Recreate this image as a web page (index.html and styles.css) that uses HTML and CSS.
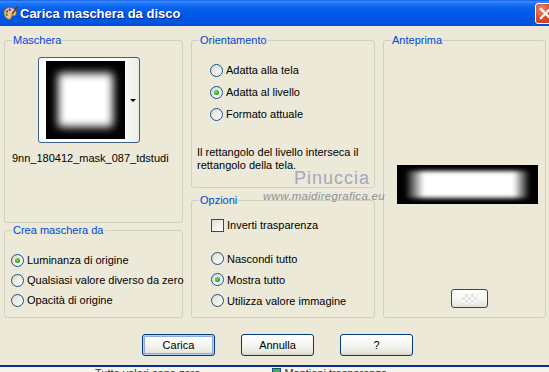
FILE: index.html
```html
<!DOCTYPE html>
<html lang="it">
<head>
<meta charset="utf-8">
<title>Carica maschera da disco</title>
<link rel="stylesheet" href="styles.css">
</head>
<body>
<div class="window">
  <div class="titlebar">
    <svg class="app-icon" width="15" height="15" viewBox="0 0 15 15">
      <path d="M7 1.5C3.5 1.5 1 3.8 1 7c0 3.2 2.6 6.3 5.6 6.3 1.4 0 1.6-1 1.1-1.9-.5-.9.1-1.6 1-1.6h1.6c1.8 0 3-1 3-2.9C13.3 3.8 10.6 1.5 7 1.5z" fill="#E9C79A" stroke="#8A5A2A" stroke-width=".8"/>
      <circle cx="4" cy="5.5" r="1.2" fill="#E02020"/>
      <circle cx="6.8" cy="3.8" r="1.2" fill="#2050E0"/>
      <circle cx="3.8" cy="8.8" r="1.2" fill="#20A020"/>
      <path d="M13.8 1.2 8.2 9.6" stroke="#6A3A10" stroke-width="1.6" stroke-linecap="round"/>
      <path d="M8.6 8.8 7.3 11" stroke="#F0B040" stroke-width="2" stroke-linecap="round"/>
    </svg>
    <span class="title">Carica maschera da disco</span>
    <span class="close">
      <svg width="21" height="21" viewBox="0 0 21 21"><path d="M6 6l9 9M15 6l-9 9" stroke="#fff" stroke-width="2.2" stroke-linecap="square"/></svg>
    </span>
  </div>

  <div class="client">
    <div class="columns">
      <div class="col">
        <fieldset class="group g-mask">
          <legend>Maschera</legend>
          <div class="thumb-btn">
            <div class="mask-img"><div class="mask-glow"></div></div>
            <span class="dd-arrow"></span>
          </div>
          <div class="filename">9nn_180412_mask_087_tdstudi</div>
        </fieldset>
        <fieldset class="group g-source">
          <legend>Crea maschera da</legend>
          <div class="opts opts-source">
            <div class="opt"><span class="radio on"></span><span>Luminanza di origine</span></div>
            <div class="opt"><span class="radio"></span><span>Qualsiasi valore diverso da zero</span></div>
            <div class="opt"><span class="radio"></span><span>Opacità di origine</span></div>
          </div>
        </fieldset>
      </div>

      <div class="col">
        <fieldset class="group g-orient">
          <legend>Orientamento</legend>
          <div class="opts opts-orient">
            <div class="opt"><span class="radio"></span><span>Adatta alla tela</span></div>
            <div class="opt"><span class="radio on"></span><span>Adatta al livello</span></div>
            <div class="opt"><span class="radio"></span><span>Formato attuale</span></div>
          </div>
          <p class="desc">Il rettangolo del livello interseca il<br>rettangolo della tela.</p>
        </fieldset>
        <fieldset class="group g-options">
          <legend>Opzioni</legend>
          <div class="opt opt-check"><span class="checkbox"></span><span>Inverti trasparenza</span></div>
          <div class="opts opts-options">
            <div class="opt"><span class="radio"></span><span>Nascondi tutto</span></div>
            <div class="opt"><span class="radio on"></span><span>Mostra tutto</span></div>
            <div class="opt"><span class="radio"></span><span>Utilizza valore immagine</span></div>
          </div>
        </fieldset>
      </div>

      <div class="col">
        <fieldset class="group g-preview">
          <legend>Anteprima</legend>
          <div class="preview"><div class="preview-glow"></div></div>
          <div class="mini-btn"><span class="checker"></span></div>
        </fieldset>
      </div>
    </div>

    <div class="buttons">
      <button class="btn default">Carica</button>
      <button class="btn">Annulla</button>
      <button class="btn">?</button>
    </div>

    <div class="watermark">
      <span class="wm-name">Pinuccia</span>
      <span class="wm-url">www.maidiregrafica.eu</span>
    </div>
  </div>
</div>
<div class="under">
  <span class="u1">Tutto valori sono zero</span>
  <span class="u2"><span class="ucheck"></span>Mantieni trasparenza</span>
</div>
</body>
</html>
```

FILE: styles.css
```css
* { box-sizing: border-box; }
html, body { margin: 0; padding: 0; }
body {
  width: 549px;
  height: 372px;
  overflow: hidden;
  background: #ECE9D8;
  font-family: "Liberation Sans", Arial, sans-serif;
  font-size: 11px;
  color: #000;
}
.window {
  height: 367px;
  display: flex;
  flex-direction: column;
}
.titlebar {
  height: 26px;
  flex: none;
  display: flex;
  align-items: center;
  overflow: hidden;
  background: linear-gradient(#0A5AE8 0%, #3D8BFA 6%, #1E74F6 14%, #0863EE 30%, #0058E6 55%, #0055E2 80%, #0050D8 100%);
  padding-left: 3px;
}
.app-icon { flex: none; margin-top: 1px; }
.title {
  margin-left: 2px;
  color: #fff;
  font-weight: bold;
  font-size: 13px;
  text-shadow: 1px 1px 0 #0A2A8A;
  margin-top: 1px;
}
.close {
  margin-left: auto;
  margin-right: -7px;
  width: 21px;
  height: 21px;
  flex: none;
  border: 1px solid #fff;
  border-radius: 3px;
  background: radial-gradient(circle at 30% 30%, #E98C6E 0%, #D8512E 45%, #C03A18 100%);
  display: flex;
  align-items: center;
  justify-content: center;
  margin-top: 1px;
}
.close svg { display: block; margin: -1px; }

.client {
  flex: 1;
  position: relative;
  padding: 8px 3px 0 4px;
  border-bottom: 2px solid #0A2C9E;
}
.columns {
  display: grid;
  grid-template-columns: 179px 184px 163px;
  column-gap: 8px;
}
.col { display: flex; flex-direction: column; }

.group {
  margin: 0;
  padding: 0;
  min-width: 0;
  border: 1px solid #D0D0BF;
  border-radius: 3px;
}
.group legend {
  color: #0046D5;
  font-size: 11px;
  line-height: 13px;
  padding: 0 1px;
  margin-left: 7px;
}
.g-mask { height: 189px; }
.g-source { height: 94px; margin-top: 1px; }
.g-orient { height: 154px; }
.g-options { height: 124px; margin-top: 6px; }
.g-preview { height: 284px; }

.thumb-btn {
  margin: 10px 0 0 33px;
  width: 102px;
  height: 86px;
  border: 1px solid #3C5F88;
  border-radius: 3px;
  background: linear-gradient(to right, #fff 0%, #fff 80%, #EDEDE8 100%);
  padding: 4px 7px;
  display: flex;
  align-items: center;
}
.mask-img {
  width: 79px;
  height: 78px;
  background: #000;
  padding: 12px;
  overflow: hidden;
  flex: none;
}
.mask-glow {
  width: 100%;
  height: 100%;
  background: #fff;
  border-radius: 3px;
  filter: blur(4px);
}
.dd-arrow {
  margin-left: 5px;
  width: 0;
  height: 0;
  border-left: 3px solid transparent;
  border-right: 3px solid transparent;
  border-top: 3px solid #000;
}
.filename {
  margin: 9px 0 0 7px;
  line-height: 13px;
  white-space: nowrap;
  overflow: hidden;
}

.opts { display: flex; flex-direction: column; }
.opt {
  display: flex;
  align-items: center;
  gap: 3px;
  white-space: nowrap;
}
.opts-source { margin-top: 13px; padding-left: 6px; }
.opts-source .opt { height: 20px; }
.opts-orient { margin-top: 12px; padding-left: 18px; }
.opts-orient .opt { height: 22px; }
.opt-check { height: 20px; margin-top: 8px; padding-left: 19px; }
.opts-options { margin-top: 13px; padding-left: 19px; }
.opts-options .opt { height: 21px; }

.radio {
  width: 13px;
  height: 13px;
  flex: none;
  border: 1px solid #1C5180;
  border-radius: 50%;
  background: linear-gradient(135deg, #D8D8D1 0%, #F0F0EA 55%, #fff 100%);
  display: flex;
  align-items: center;
  justify-content: center;
}
.radio.on::after {
  content: "";
  width: 5px;
  height: 5px;
  border-radius: 50%;
  background: radial-gradient(circle at 40% 35%, #72E26E 0%, #2BAA2B 60%, #1A8A1A 100%);
}
.checkbox {
  width: 13px;
  height: 13px;
  flex: none;
  border: 1px solid #1C5180;
  background: linear-gradient(135deg, #DCDCD5 0%, #F4F4F0 60%, #fff 100%);
}

.desc {
  margin: 21px 0 0 5px;
  line-height: 13px;
}

.preview {
  margin: 118px 0 0 13px;
  width: 141px;
  height: 39px;
  background: #000;
  padding: 6px 8px;
  overflow: hidden;
}
.preview-glow {
  width: 100%;
  height: 100%;
  background: linear-gradient(to right, #000 0%, #fff 15%, #fff 87%, #000 100%);
  filter: blur(2px);
}
.mini-btn {
  margin: 85px 0 0 67px;
  width: 37px;
  height: 19px;
  border: 1px solid #1F4C78;
  border-radius: 3px;
  background: linear-gradient(#FFFFFF, #F4F4F0 60%, #E2E0D8);
  display: flex;
  align-items: center;
  justify-content: center;
}
.checker {
  width: 16px;
  height: 10px;
  background:
    linear-gradient(45deg, #E4E4E4 25%, transparent 25%, transparent 75%, #E4E4E4 75%) 0 0 / 6px 6px,
    linear-gradient(45deg, #E4E4E4 25%, transparent 25%, transparent 75%, #E4E4E4 75%) 3px 3px / 6px 6px,
    #FAFAFA;
}

.buttons {
  display: flex;
  gap: 26px;
  padding-left: 138px;
  margin-top: 16px;
}
.btn {
  width: 73px;
  height: 22px;
  border: 1px solid #003C74;
  border-radius: 3px;
  background: linear-gradient(#FFFFFF 0%, #F5F5F1 50%, #E9E7DF 85%, #D8D3C6 100%);
  font-family: "Liberation Sans", Arial, sans-serif;
  font-size: 11px;
  color: #000;
  padding: 0;
}
.btn.default {
  box-shadow: inset 0 0 0 1px #B6CFF5, inset 0 0 0 2px #8CAAE6;
}

.watermark {
  position: absolute;
  left: 263px;
  top: 142px;
  display: flex;
  flex-direction: column;
  align-items: flex-start;
  pointer-events: none;
}
.wm-name {
  margin-left: 31px;
  font-size: 18px;
  line-height: 21px;
  letter-spacing: 1px;
  color: #A2A8BE;
}
.wm-url {
  font-size: 11.5px;
  line-height: 14px;
  font-style: italic;
  color: #8E919A;
  letter-spacing: 0.3px;
}

.under {
  height: 5px;
  overflow: hidden;
  background: #F6F5F0;
  display: flex;
  align-items: flex-start;
  font-size: 11px;
  line-height: 11px;
  color: #333;
}
.under .u1 { margin-left: 95px; padding-top: 1px; }
.under .u2 { margin-left: 72px; padding-top: 1px; display: flex; gap: 3px; }
.ucheck { width: 9px; height: 9px; border: 1px solid #1C5180; background: #3CB43C; }
```
